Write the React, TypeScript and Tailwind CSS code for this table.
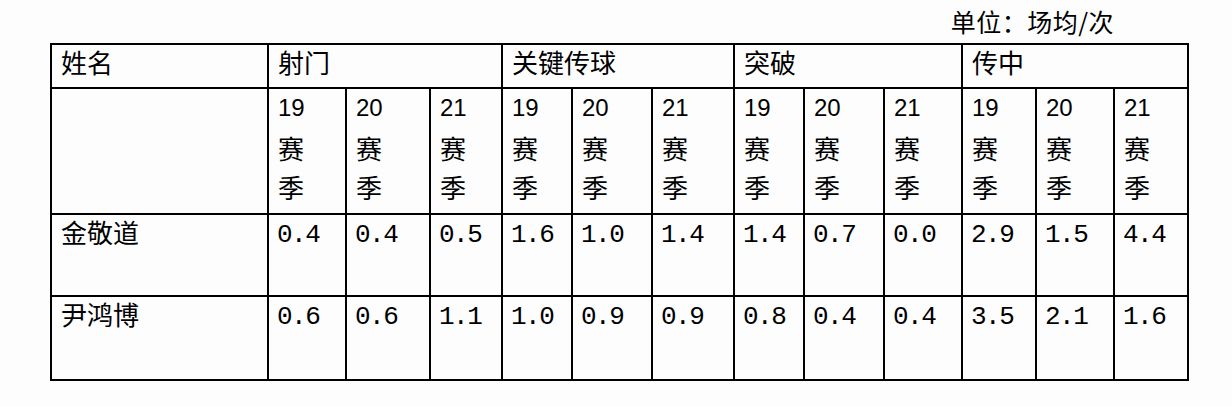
import React from 'react'

// Per-match stats table (单位：场均/次)
const CJK = "font-['Noto_Sans_CJK_SC',sans-serif]"
const SEASON_CELL = "font-['Liberation_Sans','Noto_Sans_CJK_SC',sans-serif]"
const NUM = "font-['Liberation_Mono',monospace]"

const groups = ['射门', '关键传球', '突破', '传中']
const seasons = ['19', '20', '21']

const players = [
  { name: '金敬道', values: ['0.4', '0.4', '0.5', '1.6', '1.0', '1.4', '1.4', '0.7', '0.0', '2.9', '1.5', '4.4'] },
  { name: '尹鸿博', values: ['0.6', '0.6', '1.1', '1.0', '0.9', '0.9', '0.8', '0.4', '0.4', '3.5', '2.1', '1.6'] },
]

const cell = 'border-l-2 border-t-2 border-black'

export default function App() {
  return (
    <div className="w-[1232px] h-[406px] bg-[#fdfdfd] text-black overflow-hidden">
      {/* Unit caption */}
      <div className="h-[43px] flex justify-end pr-[118px]">
        <span className={`${CJK} text-[25px] leading-[43px] tracking-[0.5px]`}>单位：场均/次</span>
      </div>

      {/* Table */}
      <div className="pl-[50px]">
        <div className="w-[1139px] grid grid-cols-[217px_78px_84px_72px_70px_80px_82px_70px_80px_78px_74px_78px_74px] grid-rows-[44px_126px_82px_84px] border-r-2 border-b-2 border-black">
          {/* Header row */}
          <div className={`${cell} ${CJK} text-[26px] leading-[34px] pl-[9px]`}>姓名</div>
          {groups.map(g => (
            <div key={g} className={`${cell} ${CJK} col-span-3 text-[26px] leading-[34px] pl-[9px]`}>
              {g}
            </div>
          ))}

          {/* Season row */}
          <div className={cell} />
          {groups.map(g =>
            seasons.map(s => (
              <div key={g + s} className={`${cell} ${SEASON_CELL} pl-[9px] -mt-0`}>
                <div className="text-[24px] leading-[39px] -translate-y-[1px]">{s}</div>
                <div className={`${CJK} text-[26px] leading-[39px]`}>赛</div>
                <div className={`${CJK} text-[26px] leading-[39px]`}>季</div>
              </div>
            ))
          )}

          {/* Player rows */}
          {players.map(p => (
            <React.Fragment key={p.name}>
              <div className={`${cell} ${CJK} text-[26px] leading-[34px] pl-[9px]`}>{p.name}</div>
              {p.values.map((v, i) => (
                <div key={i} className={`${cell} ${NUM} text-[26px] leading-[34px] tracking-[-1.5px] pl-[8px] pt-[3px]`}>
                  {v}
                </div>
              ))}
            </React.Fragment>
          ))}
        </div>
      </div>
    </div>
  )
}
